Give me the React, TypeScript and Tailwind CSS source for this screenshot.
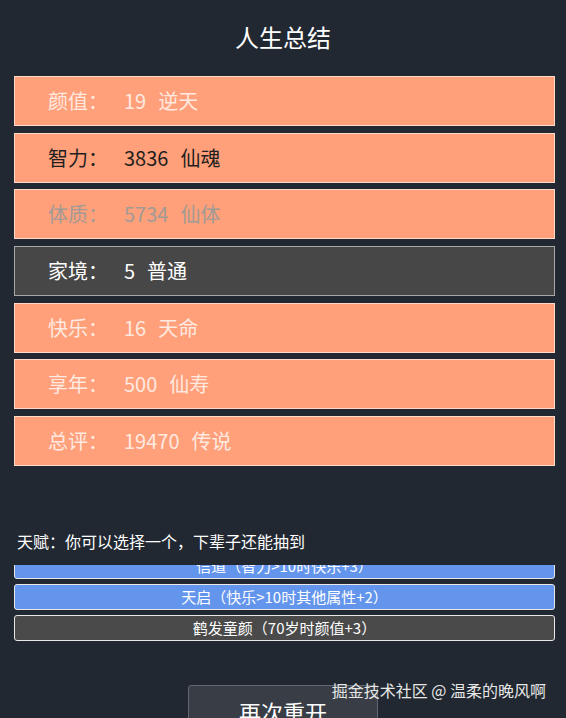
import React from "react";

type Stat = {
  label: string;
  value: number;
  grade: string;
  tone: "light" | "dark" | "muted" | "plain";
};

const stats: Stat[] = [
  { label: "颜值", value: 19, grade: "逆天", tone: "light" },
  { label: "智力", value: 3836, grade: "仙魂", tone: "dark" },
  { label: "体质", value: 5734, grade: "仙体", tone: "muted" },
  { label: "家境", value: 5, grade: "普通", tone: "plain" },
  { label: "快乐", value: 16, grade: "天命", tone: "light" },
  { label: "享年", value: 500, grade: "仙寿", tone: "light" },
  { label: "总评", value: 19470, grade: "传说", tone: "light" },
];

const talents = [
  { name: "信道（智力>10时快乐+3）", picked: true },
  { name: "天启（快乐>10时其他属性+2）", picked: true },
  { name: "鹤发童颜（70岁时颜值+3）", picked: false },
];

const toneClass: Record<Stat["tone"], string> = {
  light: "bg-[#ffa07a] border-[#fcd9c8] text-[#ffe9e0]",
  dark: "bg-[#ffa07a] border-[#fcd9c8] text-[#1f1f1f]",
  muted: "bg-[#ffa07a] border-[#fcd9c8] text-[#a29a95]",
  plain: "bg-[#474747] border-[#a8a8a8] text-white",
};

function StatRow({ stat }: { stat: Stat }) {
  return (
    <div
      className={`flex h-[50px] items-center border pl-[33px] text-[20px] ${toneClass[stat.tone]}`}
    >
      <span className="w-[76px]">{stat.label}：</span>
      <span>{stat.value}</span>
      <span className="ml-[12px]">{stat.grade}</span>
    </div>
  );
}

export default function App() {
  return (
    <div
      className="relative min-h-[718px] bg-[#222831] pb-10 text-white"
      style={{ fontFamily: '"Noto Sans CJK SC", "Noto Sans", sans-serif' }}
    >
      <h1 className="pt-[19px] text-center text-[24px] leading-[36px]">人生总结</h1>

      <div className="mt-[21px] flex flex-col gap-[6.7px] pl-[14px] pr-[11px]">
        {stats.map((stat) => (
          <StatRow key={stat.label} stat={stat} />
        ))}
      </div>

      <p className="mt-[63px] pl-[17px] text-[16px] leading-[24px]">
        天赋：你可以选择一个，下辈子还能抽到
      </p>

      {/* talent list, scrolled a little so the first entry is cut off */}
      <div className="mt-[12px] h-[82px] overflow-hidden pl-[14px] pr-[11px]">
        <ul className="-mt-[12px] flex flex-col gap-[5px]">
          {talents.map((talent) => (
            <li
              key={talent.name}
              className={`flex h-[26px] items-center justify-center rounded-[3px] border border-[#e8e8e8] text-[15px] ${
                talent.picked ? "bg-[#6495ed]" : "bg-[#4a4a4a]"
              }`}
            >
              {talent.name}
            </li>
          ))}
        </ul>
      </div>

      <div className="mt-[38px] flex justify-center">
        <button
          type="button"
          className="h-[52px] w-[190px] rounded-[3px] border border-[#62666d] bg-[#393e46] text-[22px] text-white"
        >
          再次重开
        </button>
      </div>

      <span className="absolute right-[20px] top-[678px] text-[16px] leading-[24px] text-[#e6e6e6]">
        掘金技术社区 @ 温柔的晚风啊
      </span>
    </div>
  );
}
